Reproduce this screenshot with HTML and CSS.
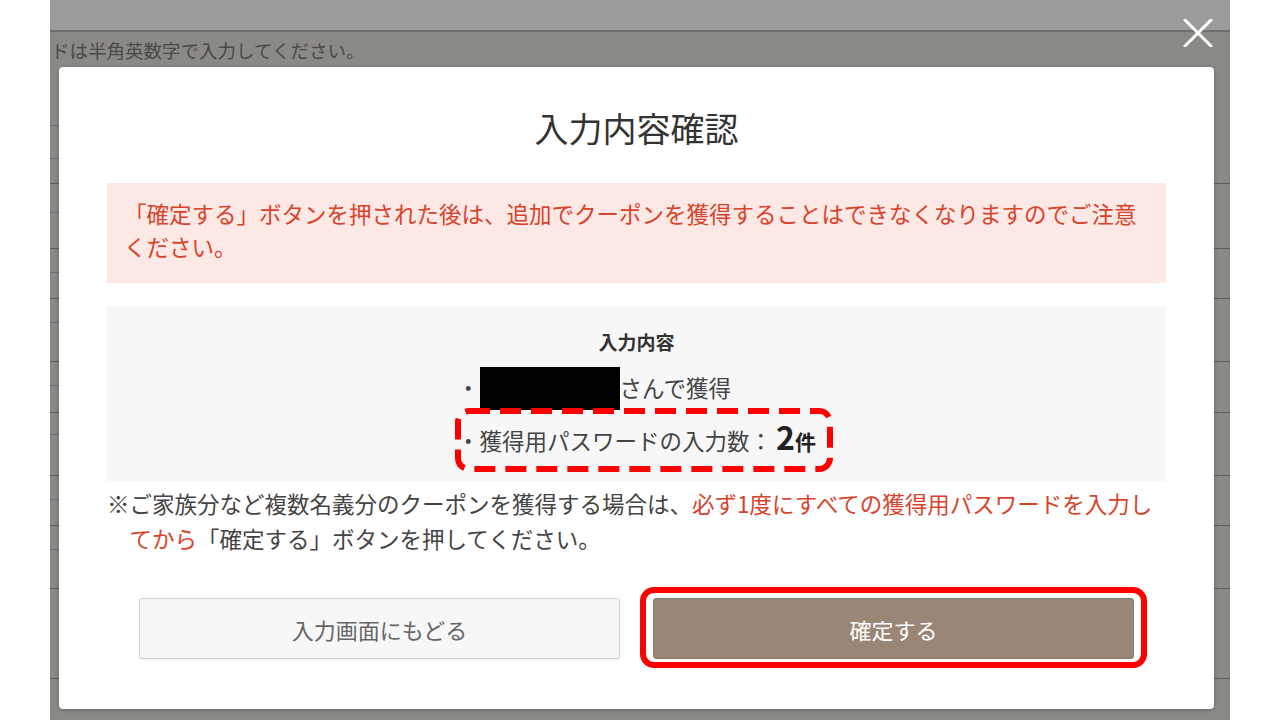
FILE: index.html
```html
<!DOCTYPE html>
<html lang="ja">
<head>
    <meta charset="UTF-8">
    <meta name="viewport" content="width=device-width, initial-scale=1.0">
    <title>入力内容確認</title>
    <link rel="stylesheet" href="styles.css">
</head>
<body>
    <div class="page">
        <div class="page-head"></div>
        <p class="page-note">ドは半角英数字で入力してください。</p>

        <!-- 背面のフォーム表（オーバーレイの下） -->
        <div class="bg-table">
            <div class="bg-row">
                <div class="bg-side"><div class="sub h58"></div><div class="sub h33"></div><div class="sub h25"></div></div>
            </div>
            <div class="bg-row">
                <div class="bg-side"><div class="sub h29"></div><div class="sub h36"></div></div>
            </div>
            <div class="bg-row">
                <div class="bg-side"><div class="sub h24"></div><div class="sub h26"></div></div>
            </div>
            <div class="bg-row">
                <div class="bg-side"><div class="sub h24"></div><div class="sub h39"></div></div>
            </div>
            <div class="bg-row">
                <div class="bg-side"><div class="sub h24"></div><div class="sub h27"></div></div>
            </div>
            <div class="bg-row">
                <div class="bg-side"><div class="sub h22"></div><div class="sub h41"></div></div>
            </div>
            <div class="bg-row">
                <div class="bg-side"><div class="sub h24"></div><div class="sub h26"></div></div>
            </div>
            <div class="bg-row">
                <div class="bg-side"><div class="sub h24"></div><div class="sub h39"></div></div>
            </div>
            <div class="bg-row">
                <div class="bg-side"><div class="sub h90"></div></div>
            </div>
        </div>

        <button class="modal-close" aria-label="閉じる">
            <svg width="30" height="28" viewBox="0 0 30 28">
                <path d="M2 1 L28 27 M28 1 L2 27" stroke="#fff" stroke-width="3" stroke-linecap="round"/>
            </svg>
        </button>

        <div class="modal">
            <h2 class="modal-title">入力内容確認</h2>

            <p class="alert">「確定する」ボタンを押された後は、追加でクーポンを獲得することはできなくなりますのでご注意ください。</p>

            <div class="summary">
                <h3>入力内容</h3>
                <ul class="summary-list">
                    <li>・<span class="masked"></span>さんで獲得</li>
                    <li class="marked">・獲得用パスワードの入力数：<b class="count">2</b><b class="unit">件</b>
                        <svg class="mark-dashed" width="378" height="64" viewBox="0 0 378 64">
                            <rect x="3" y="3" width="372" height="58" rx="11" fill="none" stroke="#f00" stroke-width="6" stroke-dasharray="21 10"/>
                        </svg>
                    </li>
                </ul>
            </div>

            <p class="note">※ご家族分など複数名義分のクーポンを獲得する場合は、<em>必ず1度にすべての獲得用パスワードを入力してから</em>「確定する」ボタンを押してください。</p>

            <div class="actions">
                <button class="btn btn-back">入力画面にもどる</button>
                <div class="btn-wrap">
                    <button class="btn btn-ok">確定する</button>
                    <span class="mark-solid"></span>
                </div>
            </div>
        </div>
    </div>
</body>
</html>
```

FILE: styles.css
```css
body {
    margin: 0;
    background: #fff;
    font-family: "Noto Sans CJK JP", "Noto Sans", sans-serif;
    color: #444;
}

.page {
    position: relative;
    margin: 0 50px;
    height: 720px;
    background: #8a8985;
    overflow: hidden;
}

.page-head {
    height: 30px;
    background: #9b9b9b;
    border-bottom: 2px solid #6f6f6f;
}

.page-note {
    margin: 0;
    padding-left: 1px;
    font-size: 18.5px;
    line-height: 36px;
    color: #4a4a48;
}

/* 背面の表 */
.bg-row {
    display: flex;
    border-bottom: 1px solid #5d5c59;
}

.bg-side {
    width: 20px;
    display: flex;
    flex-direction: column;
}

.sub {
    box-sizing: border-box;
    border-bottom: 1px solid #6e6d6a;
}

.sub:last-child { border-bottom: none; }

.h22 { height: 22px; }
.h24 { height: 24px; }
.h25 { height: 24px; }
.h26 { height: 25px; }
.h27 { height: 26px; }
.h29 { height: 29px; }
.h33 { height: 33px; }
.h36 { height: 35px; }
.h39 { height: 38px; }
.h41 { height: 40px; }
.h58 { height: 58px; }
.h90 { height: 89px; }

.modal-close {
    position: absolute;
    left: 1133px;
    top: 19px;
    padding: 0;
    border: none;
    background: none;
    line-height: 0;
}

.modal {
    position: absolute;
    left: 9px;
    top: 67px;
    width: 1155px;
    height: 642px;
    box-sizing: border-box;
    padding: 36px 48px 0;
    background: #fff;
    border-radius: 4px;
    box-shadow: 0 1px 4px rgba(0,0,0,0.25);
}

.modal-title {
    margin: 0;
    font-size: 34px;
    font-weight: normal;
    line-height: 50px;
    text-align: center;
    color: #333;
}

.alert {
    margin: 30px 0 0;
    padding: 14px 17px 20px;
    background: #fce8e4;
    color: #d8432c;
    font-size: 22.5px;
    line-height: 33px;
}

.summary {
    margin-top: 23px;
    padding: 22px 0 21px;
    background: #f7f7f7;
}

.summary h3 {
    margin: 0;
    font-size: 19px;
    line-height: 28px;
    text-align: center;
    color: #333;
}

.summary-list {
    width: fit-content;
    margin: 7px auto 0;
    padding: 0;
    list-style: none;
    font-size: 22.5px;
}

.summary-list li {
    position: relative;
    height: 48px;
    line-height: 48px;
    white-space: nowrap;
}

.summary-list li + li {
    margin-top: 1px;
}

.masked {
    display: inline-block;
    width: 140px;
    height: 43px;
    background: #000;
    vertical-align: middle;
    margin-top: -4px;
}

.count {
    margin-left: 4px;
    font-size: 32px;
    color: #222;
}

.unit {
    font-size: 21px;
    color: #222;
}

.mark-dashed {
    position: absolute;
    left: -2px;
    top: -4px;
}

.note {
    margin: 5px 0 0;
    padding-left: 1em;
    text-indent: -1em;
    font-size: 22.5px;
    line-height: 35px;
    color: #444;
}

.note em {
    font-style: normal;
    color: #d8432c;
}

.actions {
    display: flex;
    justify-content: center;
    gap: 33px;
    margin-top: 42px;
}

.btn {
    display: block;
    width: 481px;
    height: 61px;
    border-radius: 3px;
    font-family: inherit;
    font-size: 22px;
    cursor: pointer;
}

.btn-back {
    background: #f7f7f7;
    border: 1px solid #cfcfcf;
    color: #666;
    box-shadow: 0 1px 2px rgba(0,0,0,0.08);
}

.btn-ok {
    background: #998676;
    border: 1px solid #8b7969;
    color: #fff;
}

.btn-wrap {
    position: relative;
}

.mark-solid {
    position: absolute;
    top: -11px;
    left: -13px;
    right: -13px;
    bottom: -9px;
    border: 6px solid #f00;
    border-radius: 14px;
}
```
